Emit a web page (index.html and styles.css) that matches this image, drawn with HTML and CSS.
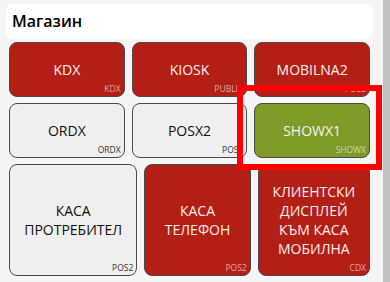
FILE: index.html
```
<!DOCTYPE html>
<html lang="bg">
<head>
<meta charset="utf-8">
<title>Магазин</title>
<link rel="stylesheet" href="styles.css">
</head>
<body>
<div class="page">
  <main class="main">
    <header class="header"><h1 class="title">Магазин</h1></header>
    <section class="tiles">
      <div class="row row-even">
        <div class="tile red"><span class="name">KDX</span><span class="code">KDX</span></div>
        <div class="tile red"><span class="name">KIOSK</span><span class="code">PUBLIC</span></div>
        <div class="tile red"><span class="name">MOBILNA2</span><span class="code">POS2</span></div>
      </div>
      <div class="row row-even">
        <div class="tile light"><span class="name">ORDX</span><span class="code">ORDX</span></div>
        <div class="tile light"><span class="name">POSX2</span><span class="code">POS2</span></div>
        <div class="tile green"><span class="name">SHOWX1</span><span class="code">SHOWX</span></div>
      </div>
      <div class="row row-last">
        <div class="tile light"><span class="name">КАСА<br>ПРОТРЕБИТЕЛ</span><span class="code">POS2</span></div>
        <div class="tile red"><span class="name">КАСА<br>ТЕЛЕФОН</span><span class="code">POS2</span></div>
        <div class="tile red"><span class="name">КЛИЕНТСКИ<br>ДИСПЛЕЙ<br>КЪМ КАСА<br>МОБИЛНА</span><span class="code">CDX</span></div>
      </div>
    </section>
  </main>
  <div class="scrollbar"></div>
</div>
<div class="highlight"></div>
</body>
</html>
```
FILE: styles.css
```
html, body {
  margin: 0;
  padding: 0;
}
body {
  background: #f5f5f5;
  font-family: "Open Sans", "Noto Sans", sans-serif;
  width: 390px;
  height: 282px;
  overflow: hidden;
  position: relative;
}
.page {
  display: flex;
  height: 282px;
}
.main {
  flex: 1;
  min-width: 0;
}
.scrollbar {
  width: 7px;
  background: #c1c1c1;
}
.header {
  margin: 4px 10px 0 6px;
  padding: 6px 6px 7px;
  background: #ffffff;
  border-radius: 7px;
}
.title {
  margin: 0;
  font-size: 16px;
  font-weight: 600;
  color: #000;
  line-height: 22px;
}
.tiles {
  margin: 3px 13px 0 9px;
  display: flex;
  flex-direction: column;
  gap: 6px;
}
.row {
  display: grid;
  gap: 7px;
}
.row-even {
  grid-template-columns: 1fr 1fr 1fr;
}
.row-last {
  grid-template-columns: 128fr 106fr 112fr;
}
.tile {
  position: relative;
  border: 1px solid #4a4a4a;
  border-radius: 8px;
  padding: 17px 4px;
  display: flex;
  align-items: center;
  justify-content: center;
  text-align: center;
}
.name {
  font-size: 14px;
  line-height: 19px;
}
.code {
  position: absolute;
  right: 3px;
  bottom: 2px;
  font-size: 8.5px;
  line-height: 11px;
}
.red {
  background: #b31f14;
  color: #f7f0f0;
}
.red .code {
  color: rgba(255, 255, 255, 0.6);
}
.green {
  background: #7e9a27;
  color: #f2f5ea;
}
.green .code {
  color: rgba(255, 255, 255, 0.6);
}
.light {
  background: #efefef;
  color: #111;
}
.light .code {
  color: #333;
}
.highlight {
  position: absolute;
  left: 237px;
  top: 85px;
  width: 133px;
  height: 73px;
  border: 6px solid #ff0000;
}
```
